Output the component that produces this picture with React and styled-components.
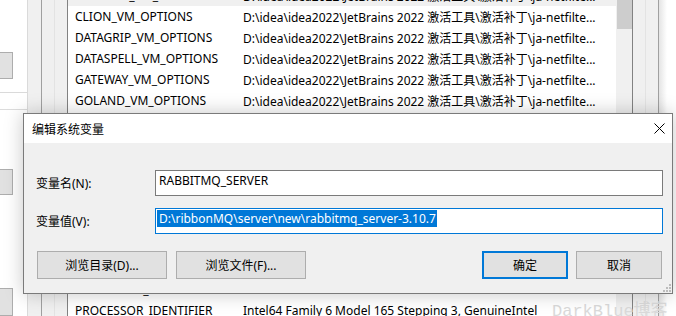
import React from 'react'
import styled, { createGlobalStyle } from 'styled-components'

const JB_PATH = 'D:\\idea\\idea2022\\JetBrains 2022 激活工具\\激活补丁\\ja-netfilte...'

// rows 6..13 sit fully behind the dialog, so they are left blank
const rows = [
  { name: 'APPCODE_VM_OPTIONS', value: JB_PATH, active: true },
  { name: 'CLION_VM_OPTIONS', value: JB_PATH },
  { name: 'DATAGRIP_VM_OPTIONS', value: JB_PATH },
  { name: 'DATASPELL_VM_OPTIONS', value: JB_PATH },
  { name: 'GATEWAY_VM_OPTIONS', value: JB_PATH },
  { name: 'GOLAND_VM_OPTIONS', value: JB_PATH },
  { name: '', value: '' },
  { name: '', value: '' },
  { name: '', value: '' },
  { name: '', value: '' },
  { name: '', value: '' },
  { name: '', value: '' },
  { name: '', value: '' },
  { name: '', value: '' },
  { name: 'PROCESSOR_ARCHITECTURE', value: 'AMD64' },
  { name: 'PROCESSOR_IDENTIFIER', value: 'Intel64 Family 6 Model 165 Stepping 3, GenuineIntel' },
  { name: 'PROCESSOR_LEVEL', value: '6' },
]

const GlobalStyle = createGlobalStyle`
  html, body {
    margin: 0;
    padding: 0;
    background: #ffffff;
  }
  body {
    font-family: "Noto Sans", "Noto Sans CJK SC", sans-serif;
    font-size: 12px;
    color: #000000;
  }
`

const Screen = styled.div`
  position: relative;
  width: 676px;
  height: 316px;
  overflow: hidden;
  display: flex;
  background: #ffffff;
`

const SideColumn = styled.div`
  flex: none;
  width: 28px;
  box-sizing: border-box;
  border-right: 1px solid #dadada;
  display: flex;
  flex-direction: column;
`

const SideBox = styled.div`
  height: 96px;
  box-sizing: border-box;
  padding-top: 52px;
  border-bottom: 1px solid #dadada;
`

const SideGap = styled.div`
  height: 18px;
  box-sizing: border-box;
  border-bottom: 1px solid #dcdcdc;
`

const StubButton = styled.div`
  width: 13px;
  height: ${(p) => p.$h}px;
  margin-top: ${(p) => p.$top}px;
  box-sizing: border-box;
  background: #e1e1e1;
  border: 1px solid #adadad;
  border-left: none;
`

const Gutter = styled.div`
  flex: none;
  width: ${(p) => p.$w}px;
  box-sizing: border-box;
  background: #f0f0f0;
  border-right: 1px solid ${(p) => p.$line};
`

const Filler = styled.div`
  flex: 1;
  background: linear-gradient(to right, #e4e4e4, #ffffff 8px);
`

const ListBox = styled.div`
  flex: none;
  width: 566px;
  box-sizing: border-box;
  border-left: 1px solid #828282;
  border-right: 1px solid #828282;
  display: flex;
  background: #ffffff;
`

const Rows = styled.div`
  flex: 1;
  overflow: hidden;
`

const RowsInner = styled.div`
  margin-top: -15px;
`

const Row = styled.div`
  display: flex;
  align-items: center;
  height: 21px;
  white-space: nowrap;
  background: ${(p) => (p.$active ? '#f0f0f0' : 'transparent')};
`

const NameCell = styled.div`
  flex: none;
  width: 175px;
  padding-left: 7px;
  box-sizing: border-box;
  overflow: hidden;
`

const ValueCell = styled.div`
  flex: 1;
  overflow: hidden;
`

const ScrollTrack = styled.div`
  flex: none;
  width: 16px;
  background: #f0f0f0;
`

const ScrollThumb = styled.div`
  height: 29px;
  margin-left: 1px;
  width: 15px;
  background: #cdcdcd;
`

const Watermark = styled.div`
  position: absolute;
  left: 552px;
  top: 296px;
  font-family: "Liberation Mono", "Noto Sans CJK SC", monospace;
  font-size: 17px;
  color: #dadada;
  white-space: nowrap;
`

const Dialog = styled.div`
  position: absolute;
  left: 23px;
  top: 113px;
  width: 650px;
  height: 181px;
  box-sizing: border-box;
  border: 1px solid #7a7a7a;
  background: #f0f0f0;
  box-shadow: 0 0 18px rgba(0, 0, 0, 0.22);
  display: flex;
  flex-direction: column;
`

const TitleBar = styled.div`
  height: 29px;
  flex: none;
  background: #ffffff;
  display: flex;
  align-items: center;
  justify-content: space-between;
  padding: 0 7px 0 8px;
`

const CloseIcon = styled.svg`
  display: block;
`

const Body = styled.div`
  flex: 1;
  padding: 27px 9px 0 12px;
  display: flex;
  flex-direction: column;
  gap: 12px;
`

const FieldRow = styled.div`
  display: grid;
  grid-template-columns: 119px 1fr;
  align-items: center;
  height: 26px;
`

const Label = styled.div`
  line-height: 17px;
  padding-top: 1px;
`

const TextBox = styled.div`
  height: 26px;
  box-sizing: border-box;
  border: 1px solid ${(p) => (p.$focused ? '#0078d7' : '#7a7a7a')};
  background: #ffffff;
  padding: 1px 0 0 1px;
  white-space: nowrap;
  overflow: hidden;
`

const TextValue = styled.span`
  display: inline-block;
  line-height: 17px;
  padding: 0 1px 0 2px;
  background: ${(p) => (p.$selected ? '#0078d7' : 'transparent')};
  color: ${(p) => (p.$selected ? '#ffffff' : '#000000')};
`

const ButtonRow = styled.div`
  display: flex;
  margin-top: 5px;
  padding: 0 1px 0 1px;
`

const Button = styled.div`
  width: ${(p) => p.$w}px;
  height: 28px;
  box-sizing: border-box;
  margin-right: ${(p) => p.$gap || 0}px;
  margin-left: ${(p) => (p.$push ? 'auto' : '0')};
  background: #e1e1e1;
  border: ${(p) => (p.$primary ? '2px solid #0078d7' : '1px solid #adadad')};
  display: flex;
  align-items: center;
  justify-content: center;
`

const Grip = styled.svg`
  position: absolute;
  right: 1px;
  bottom: 1px;
`

export default function App() {
  return (
    <Screen>
      <GlobalStyle />
      <SideColumn>
        <SideBox>
          <StubButton $h={27} $top={0} />
        </SideBox>
        <SideGap />
        <StubButton $h={27} $top={59} />
        <StubButton $h={30} $top={93} />
      </SideColumn>
      <Gutter $w={14} $line="#a0a0a0" />
      <Gutter $w={13} $line="#e3e3e3" />
      <Gutter $w={12} $line="#f0f0f0" />
      <ListBox>
        <Rows>
          <RowsInner>
            {rows.map((r, i) => (
              <Row key={i} $active={r.active}>
                <NameCell>{r.name}</NameCell>
                <ValueCell>{r.value}</ValueCell>
              </Row>
            ))}
          </RowsInner>
        </Rows>
        <ScrollTrack>
          <ScrollThumb />
        </ScrollTrack>
      </ListBox>
      <Gutter $w={13} $line="#e3e3e3" />
      <Gutter $w={13} $line="#a0a0a0" />
      <Filler />

      <Watermark>DarkBlue博客</Watermark>

      <Dialog>
        <TitleBar>
          <span>编辑系统变量</span>
          <CloseIcon width="11" height="11" viewBox="0 0 11 11">
            <path d="M0.5 0.5 L10.5 10.5 M10.5 0.5 L0.5 10.5" stroke="#000" strokeWidth="1" fill="none" />
          </CloseIcon>
        </TitleBar>
        <Body>
          <FieldRow>
            <Label>变量名(N):</Label>
            <TextBox>
              <TextValue>RABBITMQ_SERVER</TextValue>
            </TextBox>
          </FieldRow>
          <FieldRow>
            <Label>变量值(V):</Label>
            <TextBox $focused>
              <TextValue $selected>D:\ribbonMQ\server\new\rabbitmq_server-3.10.7</TextValue>
            </TextBox>
          </FieldRow>
          <ButtonRow>
            <Button $w={130} $gap={9}>浏览目录(D)...</Button>
            <Button $w={130}>浏览文件(F)...</Button>
            <Button $w={86} $gap={8} $push $primary>确定</Button>
            <Button $w={86}>取消</Button>
          </ButtonRow>
        </Body>
        <Grip width="8" height="8" viewBox="0 0 8 8">
          <rect x="6" y="0" width="2" height="2" fill="#bcbcbc" />
          <rect x="3" y="3" width="2" height="2" fill="#bcbcbc" />
          <rect x="6" y="3" width="2" height="2" fill="#bcbcbc" />
          <rect x="0" y="6" width="2" height="2" fill="#bcbcbc" />
          <rect x="3" y="6" width="2" height="2" fill="#bcbcbc" />
          <rect x="6" y="6" width="2" height="2" fill="#bcbcbc" />
        </Grip>
      </Dialog>
    </Screen>
  )
}
